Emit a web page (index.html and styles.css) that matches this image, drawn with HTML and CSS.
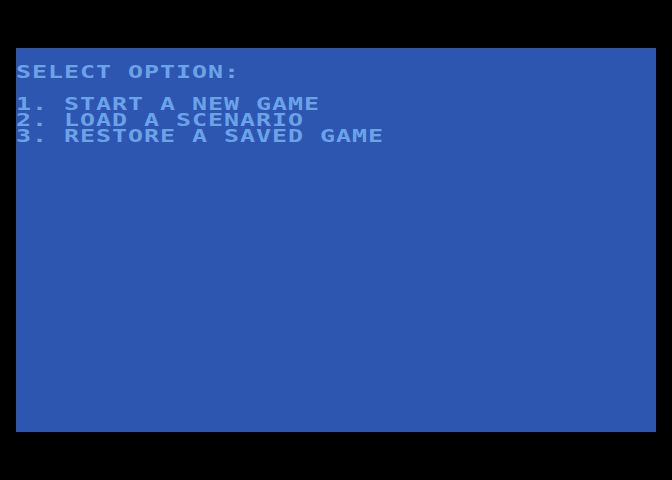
FILE: index.html
```html
<!DOCTYPE html>
<html lang="en">
<head>
    <meta charset="UTF-8">
    <title>Select Option</title>
    <link rel="stylesheet" href="styles.css">
</head>
<body>
    <div class="screen">
        <div class="row"></div>
        <div class="row"><span>SELECT OPTION:</span></div>
        <div class="row"></div>
        <div class="row"><span>1. START A NEW GAME</span></div>
        <div class="row"><span>2. LOAD A SCENARIO</span></div>
        <div class="row"><span>3. RESTORE A SAVED GAME</span></div>
    </div>
</body>
</html>
```

FILE: styles.css
```css
body {
    margin: 0;
    padding: 0;
    background-color: #000;
}

/* 40x24 text screen, each cell 16x16 */
.screen {
    width: 640px;
    height: 384px;
    margin: 48px 16px;
    background-color: #2c56b0;
    overflow: hidden;
}

.row {
    height: 16px;
    line-height: 16px;
    white-space: pre;
}

.row span {
    display: inline-block;
    font-family: "DejaVu Sans Mono", monospace;
    font-weight: bold;
    font-size: 18px;
    letter-spacing: 0.7px;
    color: #6ca2e8;
    transform: scaleX(1.3865);
    transform-origin: left center;
}
```
